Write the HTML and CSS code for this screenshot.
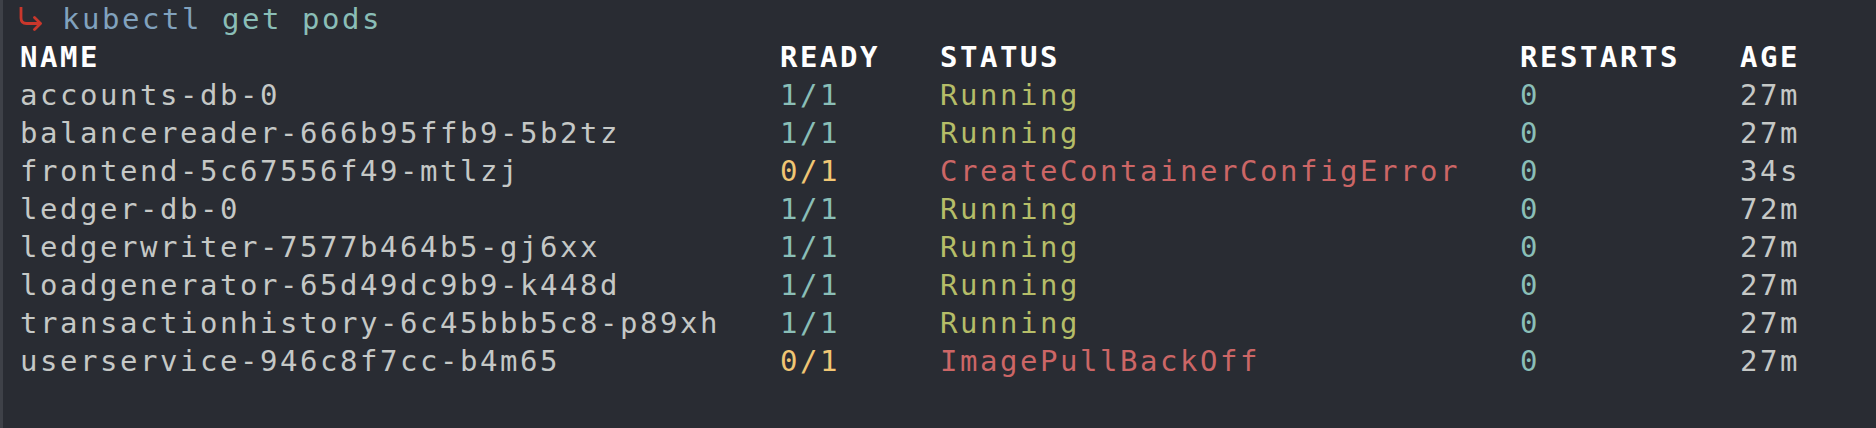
FILE: index.html
```html
<!DOCTYPE html>
<html lang="en">
<head>
<meta charset="utf-8">
<title>kubectl get pods</title>
<link rel="stylesheet" href="styles.css">
</head>
<body>
<main class="term">
  <div class="prompt">
    <svg class="arrow" width="24" height="24" viewBox="0 0 24 24" aria-hidden="true">
      <path d="M2 0.5 V11 Q2 16.5 7.5 16.5 H21" fill="none" stroke="#c9372c" stroke-width="2.8" stroke-linecap="round"/>
      <path d="M15.5 10.5 L21.5 16.5 L15.5 22.5" fill="none" stroke="#c9372c" stroke-width="2.8" stroke-linecap="round" stroke-linejoin="round"/>
    </svg>
    <span class="line"><span class="cmd">kubectl</span> <span class="arg">get pods</span></span>
  </div>
  <div class="table">
    <div class="row head"><span>NAME</span><span>READY</span><span>STATUS</span><span>RESTARTS</span><span>AGE</span></div>
    <div class="row"><span>accounts-db-0</span><span class="ok">1/1</span><span class="run">Running</span><span class="num">0</span><span>27m</span></div>
    <div class="row"><span>balancereader-666b95ffb9-5b2tz</span><span class="ok">1/1</span><span class="run">Running</span><span class="num">0</span><span>27m</span></div>
    <div class="row"><span>frontend-5c67556f49-mtlzj</span><span class="warn">0/1</span><span class="err">CreateContainerConfigError</span><span class="num">0</span><span>34s</span></div>
    <div class="row"><span>ledger-db-0</span><span class="ok">1/1</span><span class="run">Running</span><span class="num">0</span><span>72m</span></div>
    <div class="row"><span>ledgerwriter-7577b464b5-gj6xx</span><span class="ok">1/1</span><span class="run">Running</span><span class="num">0</span><span>27m</span></div>
    <div class="row"><span>loadgenerator-65d49dc9b9-k448d</span><span class="ok">1/1</span><span class="run">Running</span><span class="num">0</span><span>27m</span></div>
    <div class="row"><span>transactionhistory-6c45bbb5c8-p89xh</span><span class="ok">1/1</span><span class="run">Running</span><span class="num">0</span><span>27m</span></div>
    <div class="row"><span>userservice-946c8f7cc-b4m65</span><span class="warn">0/1</span><span class="err">ImagePullBackOff</span><span class="num">0</span><span>27m</span></div>
  </div>
</main>
</body>
</html>
```

FILE: styles.css
```css
html, body {
  margin: 0;
  padding: 0;
  background: #292c33;
  height: 100%;
}

.term {
  box-sizing: border-box;
  height: 428px;
  border-left: 3px solid #3e4148;
  padding: 0 0 0 17px;
  font-family: "DejaVu Sans Mono", "Liberation Mono", monospace;
  font-size: 29px;
  letter-spacing: 2.54px;
  line-height: 38px;
  color: #c5c8c6;
}

.prompt {
  display: flex;
  align-items: center;
  height: 38px;
}

.line { white-space: pre; }

.arrow {
  width: 24px;
  height: 24px;
  margin: 0 19px 0 -1px;
  flex: none;
}

.cmd { color: #81a2be; }
.arg { color: #8abeb7; }

.row {
  display: grid;
  grid-template-columns: 760px 160px 580px 220px auto;
  height: 38px;
  white-space: nowrap;
}

.head {
  color: #ffffff;
  font-weight: bold;
}

.ok { color: #8abeb7; }
.warn { color: #f0c674; }
.run { color: #b5bd68; }
.err { color: #cc6666; }
.num { color: #8abeb7; }
```
